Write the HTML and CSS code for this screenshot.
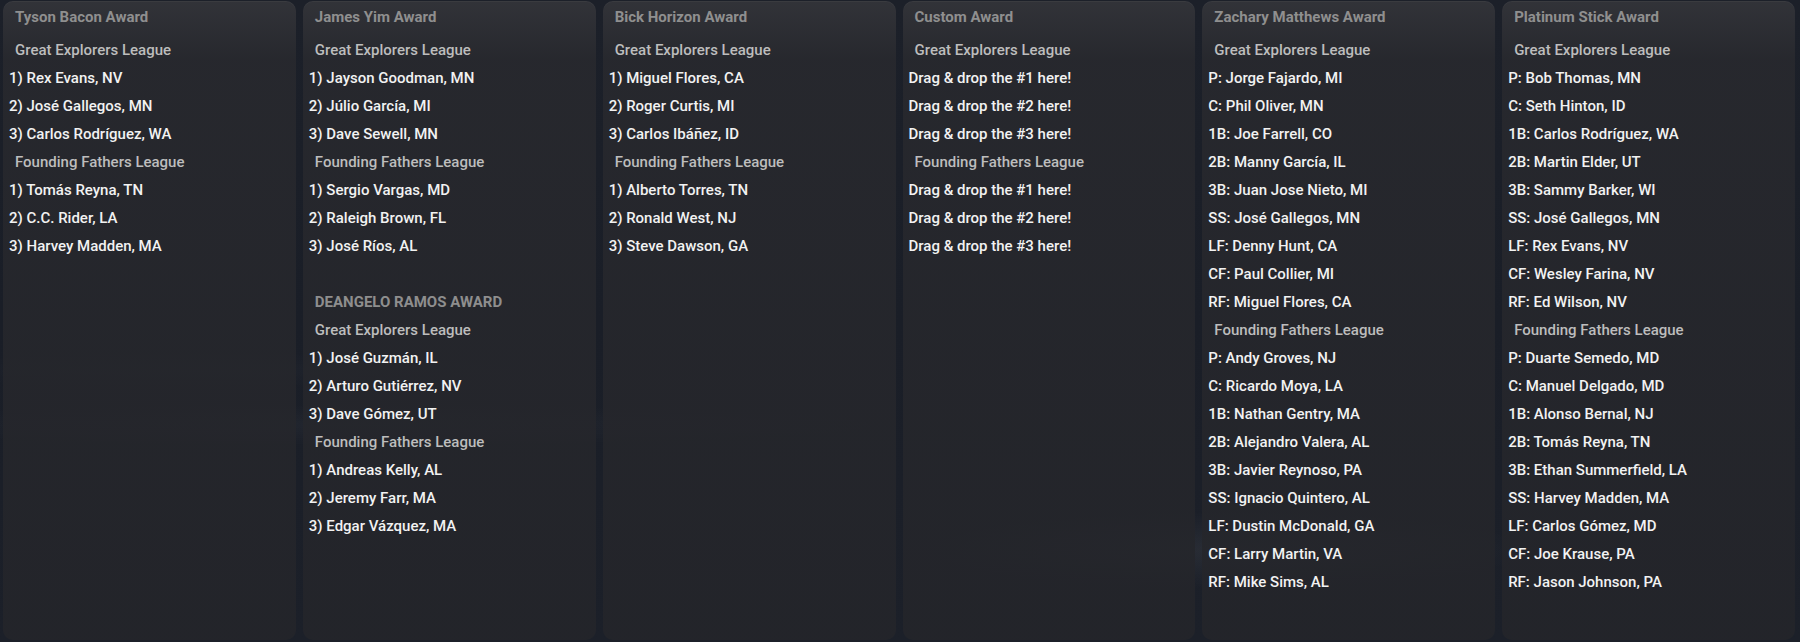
FILE: index.html
```html
<!DOCTYPE html>
<html>
<head>
<meta charset="utf-8">
<link rel="stylesheet" href="styles.css">
</head>
<body>
<div class="board">
  <section class="card">
    <div class="title">Tyson Bacon Award</div>
    <div class="league">Great Explorers League</div>
    <div class="item">1) Rex Evans, NV</div>
    <div class="item">2) José Gallegos, MN</div>
    <div class="item">3) Carlos Rodríguez, WA</div>
    <div class="league">Founding Fathers League</div>
    <div class="item">1) Tomás Reyna, TN</div>
    <div class="item">2) C.C. Rider, LA</div>
    <div class="item">3) Harvey Madden, MA</div>
  </section>
  <section class="card">
    <div class="title">James Yim Award</div>
    <div class="league">Great Explorers League</div>
    <div class="item">1) Jayson Goodman, MN</div>
    <div class="item">2) Júlio García, MI</div>
    <div class="item">3) Dave Sewell, MN</div>
    <div class="league">Founding Fathers League</div>
    <div class="item">1) Sergio Vargas, MD</div>
    <div class="item">2) Raleigh Brown, FL</div>
    <div class="item">3) José Ríos, AL</div>
    <div class="spacer"></div>
    <div class="title sub">DEANGELO RAMOS AWARD</div>
    <div class="league">Great Explorers League</div>
    <div class="item">1) José Guzmán, IL</div>
    <div class="item">2) Arturo Gutiérrez, NV</div>
    <div class="item">3) Dave Gómez, UT</div>
    <div class="league">Founding Fathers League</div>
    <div class="item">1) Andreas Kelly, AL</div>
    <div class="item">2) Jeremy Farr, MA</div>
    <div class="item">3) Edgar Vázquez, MA</div>
  </section>
  <section class="card">
    <div class="title">Bick Horizon Award</div>
    <div class="league">Great Explorers League</div>
    <div class="item">1) Miguel Flores, CA</div>
    <div class="item">2) Roger Curtis, MI</div>
    <div class="item">3) Carlos Ibáñez, ID</div>
    <div class="league">Founding Fathers League</div>
    <div class="item">1) Alberto Torres, TN</div>
    <div class="item">2) Ronald West, NJ</div>
    <div class="item">3) Steve Dawson, GA</div>
  </section>
  <section class="card">
    <div class="title">Custom Award</div>
    <div class="league">Great Explorers League</div>
    <div class="item">Drag &amp; drop the #1 here!</div>
    <div class="item">Drag &amp; drop the #2 here!</div>
    <div class="item">Drag &amp; drop the #3 here!</div>
    <div class="league">Founding Fathers League</div>
    <div class="item">Drag &amp; drop the #1 here!</div>
    <div class="item">Drag &amp; drop the #2 here!</div>
    <div class="item">Drag &amp; drop the #3 here!</div>
  </section>
  <section class="card">
    <div class="title">Zachary Matthews Award</div>
    <div class="league">Great Explorers League</div>
    <div class="item">P: Jorge Fajardo, MI</div>
    <div class="item">C: Phil Oliver, MN</div>
    <div class="item">1B: Joe Farrell, CO</div>
    <div class="item">2B: Manny García, IL</div>
    <div class="item">3B: Juan Jose Nieto, MI</div>
    <div class="item">SS: José Gallegos, MN</div>
    <div class="item">LF: Denny Hunt, CA</div>
    <div class="item">CF: Paul Collier, MI</div>
    <div class="item">RF: Miguel Flores, CA</div>
    <div class="league">Founding Fathers League</div>
    <div class="item">P: Andy Groves, NJ</div>
    <div class="item">C: Ricardo Moya, LA</div>
    <div class="item">1B: Nathan Gentry, MA</div>
    <div class="item">2B: Alejandro Valera, AL</div>
    <div class="item">3B: Javier Reynoso, PA</div>
    <div class="item">SS: Ignacio Quintero, AL</div>
    <div class="item">LF: Dustin McDonald, GA</div>
    <div class="item">CF: Larry Martin, VA</div>
    <div class="item">RF: Mike Sims, AL</div>
  </section>
  <section class="card">
    <div class="title">Platinum Stick Award</div>
    <div class="league">Great Explorers League</div>
    <div class="item">P: Bob Thomas, MN</div>
    <div class="item">C: Seth Hinton, ID</div>
    <div class="item">1B: Carlos Rodríguez, WA</div>
    <div class="item">2B: Martin Elder, UT</div>
    <div class="item">3B: Sammy Barker, WI</div>
    <div class="item">SS: José Gallegos, MN</div>
    <div class="item">LF: Rex Evans, NV</div>
    <div class="item">CF: Wesley Farina, NV</div>
    <div class="item">RF: Ed Wilson, NV</div>
    <div class="league">Founding Fathers League</div>
    <div class="item">P: Duarte Semedo, MD</div>
    <div class="item">C: Manuel Delgado, MD</div>
    <div class="item">1B: Alonso Bernal, NJ</div>
    <div class="item">2B: Tomás Reyna, TN</div>
    <div class="item">3B: Ethan Summerfield, LA</div>
    <div class="item">SS: Harvey Madden, MA</div>
    <div class="item">LF: Carlos Gómez, MD</div>
    <div class="item">CF: Joe Krause, PA</div>
    <div class="item">RF: Jason Johnson, PA</div>
  </section>
</div>
</body>
</html>
```
FILE: styles.css
```css
html, body {
  margin: 0;
  padding: 0;
  height: 100%;
}
body {
  background-color: #181c25;
  background-image:
    radial-gradient(ellipse 440px 55px at 1230px 550px, rgba(255,255,255,0.06), rgba(255,255,255,0) 70%),
    radial-gradient(ellipse 800px 30px at 350px 425px, rgba(255,255,255,0.03), rgba(255,255,255,0) 70%),
    radial-gradient(ellipse 500px 25px at 200px 370px, rgba(255,255,255,0.02), rgba(255,255,255,0) 70%),
    linear-gradient(180deg, #1c2029 0%, #1a1e27 50%, #1c2029 100%);
  font-family: Roboto, "Liberation Sans", sans-serif;
  overflow: hidden;
}
.board {
  display: grid;
  grid-template-columns: repeat(6, 1fr);
  gap: 7px;
  padding: 1px 5px 2px 3px;
  height: 642px;
  box-sizing: border-box;
}
.card {
  background: linear-gradient(180deg, rgba(52,53,58,0.9) 0px, rgba(40,41,46,0.88) 60px, rgba(36,37,42,0.86) 100%);
  border-radius: 10px;
  padding: 2px 6px 0 6px;
  box-shadow: inset 0 1px 0 rgba(255,255,255,0.04);
}
.title {
  font-size: 15px;
  font-weight: 700;
  color: #8f8f8f;
  line-height: 28px;
  height: 33px;
  padding-left: 6px;
}
.title.sub {
  height: 28px;
  color: #8e8e8e;
}
.spacer {
  height: 28px;
}
.league {
  font-size: 15px;
  font-weight: 500;
  color: #bdbdbd;
  line-height: 28px;
  padding-left: 6px;
}
.item {
  font-size: 15px;
  font-weight: 500;
  color: #f2f2f2;
  line-height: 28px;
  white-space: nowrap;
}
```
